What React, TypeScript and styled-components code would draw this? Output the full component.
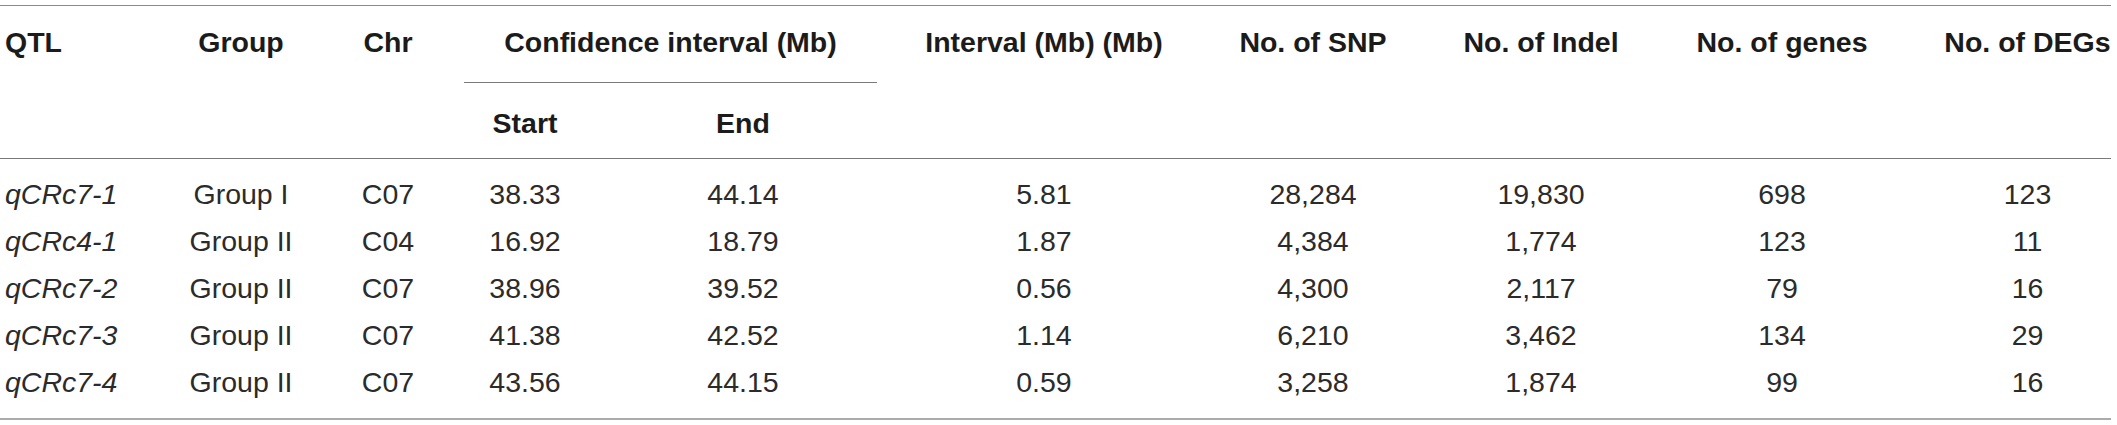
import React from "react";
import styled, { createGlobalStyle } from "styled-components";

const GlobalStyle = createGlobalStyle`
  html, body {
    margin: 0;
    padding: 0;
    background: #ffffff;
  }
  body {
    font-family: "Liberation Sans", Arial, Helvetica, sans-serif;
  }
`;

const Table = styled.table`
  margin-top: 5px;
  width: 2111px;
  table-layout: fixed;
  border-collapse: collapse;
  border-top: 1px solid #8a8a8a;
  border-bottom: 2px solid #ababab;
  font-family: "Liberation Sans", Arial, Helvetica, sans-serif;
  font-size: 28.5px;
`;

const Head = styled.thead`
  border-bottom: 1px solid #7a7a7a;
`;

type CellProps = { $first?: boolean; $last?: boolean };

const HeadCell = styled.th<CellProps>`
  padding: 20px 0 0 ${(p) => (p.$first ? "5px" : p.$last ? "24px" : "0")};
  vertical-align: top;
  text-align: ${(p) => (p.$first ? "left" : "center")};
  font-weight: 700;
  line-height: 32px;
  color: #1b1b1b;
  white-space: nowrap;
`;

const SpanCell = styled.th`
  padding: 20px 0 0 0;
  vertical-align: top;
  font-weight: 700;
  line-height: 32px;
  color: #1b1b1b;
  white-space: nowrap;
`;

const SpanLabel = styled.div`
  margin-right: 23px;
  padding-bottom: 24px;
  border-bottom: 1px solid #7a7a7a;
  text-align: center;
`;

const SubHeadCell = styled.th`
  padding: 24px 0 19px 0;
  vertical-align: top;
  text-align: center;
  font-weight: 700;
  line-height: 32px;
  color: #1b1b1b;
  white-space: nowrap;
`;

const BodyRow = styled.tr<{ $pos: "first" | "middle" | "last" }>`
  & > td {
    padding-top: ${(p) => (p.$pos === "first" ? "12px" : "0")};
    padding-bottom: ${(p) => (p.$pos === "last" ? "12px" : "0")};
  }
`;

const BodyCell = styled.td<CellProps & { $italic?: boolean }>`
  height: 47px;
  box-sizing: content-box;
  padding-left: ${(p) => (p.$first ? "5px" : p.$last ? "24px" : "0")};
  padding-right: 0;
  vertical-align: middle;
  text-align: ${(p) => (p.$first ? "left" : "center")};
  font-weight: 400;
  font-style: ${(p) => (p.$italic ? "italic" : "normal")};
  line-height: 47px;
  color: #2b2b2b;
  white-space: nowrap;
`;

const widths = [170, 142, 152, 122, 314, 288, 250, 206, 276, 191];

const rows: string[][] = [
  ["qCRc7-1", "Group I", "C07", "38.33", "44.14", "5.81", "28,284", "19,830", "698", "123"],
  ["qCRc4-1", "Group II", "C04", "16.92", "18.79", "1.87", "4,384", "1,774", "123", "11"],
  ["qCRc7-2", "Group II", "C07", "38.96", "39.52", "0.56", "4,300", "2,117", "79", "16"],
  ["qCRc7-3", "Group II", "C07", "41.38", "42.52", "1.14", "6,210", "3,462", "134", "29"],
  ["qCRc7-4", "Group II", "C07", "43.56", "44.15", "0.59", "3,258", "1,874", "99", "16"],
];

export default function App() {
  return (
    <>
      <GlobalStyle />
      <Table>
        <colgroup>
          {widths.map((w, i) => (
            <col key={i} style={{ width: `${w}px` }} />
          ))}
        </colgroup>
        <Head>
          <tr>
            <HeadCell rowSpan={2} $first>QTL</HeadCell>
            <HeadCell rowSpan={2}>Group</HeadCell>
            <HeadCell rowSpan={2}>Chr</HeadCell>
            <SpanCell colSpan={2}>
              <SpanLabel>Confidence interval (Mb)</SpanLabel>
            </SpanCell>
            <HeadCell rowSpan={2}>Interval (Mb) (Mb)</HeadCell>
            <HeadCell rowSpan={2}>No. of SNP</HeadCell>
            <HeadCell rowSpan={2}>No. of Indel</HeadCell>
            <HeadCell rowSpan={2}>No. of genes</HeadCell>
            <HeadCell rowSpan={2} $last>No. of DEGs</HeadCell>
          </tr>
          <tr>
            <SubHeadCell>Start</SubHeadCell>
            <SubHeadCell>End</SubHeadCell>
          </tr>
        </Head>
        <tbody>
          {rows.map((r, ri) => (
            <BodyRow
              key={ri}
              $pos={ri === 0 ? "first" : ri === rows.length - 1 ? "last" : "middle"}
            >
              {r.map((v, ci) => (
                <BodyCell
                  key={ci}
                  $first={ci === 0}
                  $last={ci === r.length - 1}
                  $italic={ci === 0}
                >
                  {v}
                </BodyCell>
              ))}
            </BodyRow>
          ))}
        </tbody>
      </Table>
    </>
  );
}
